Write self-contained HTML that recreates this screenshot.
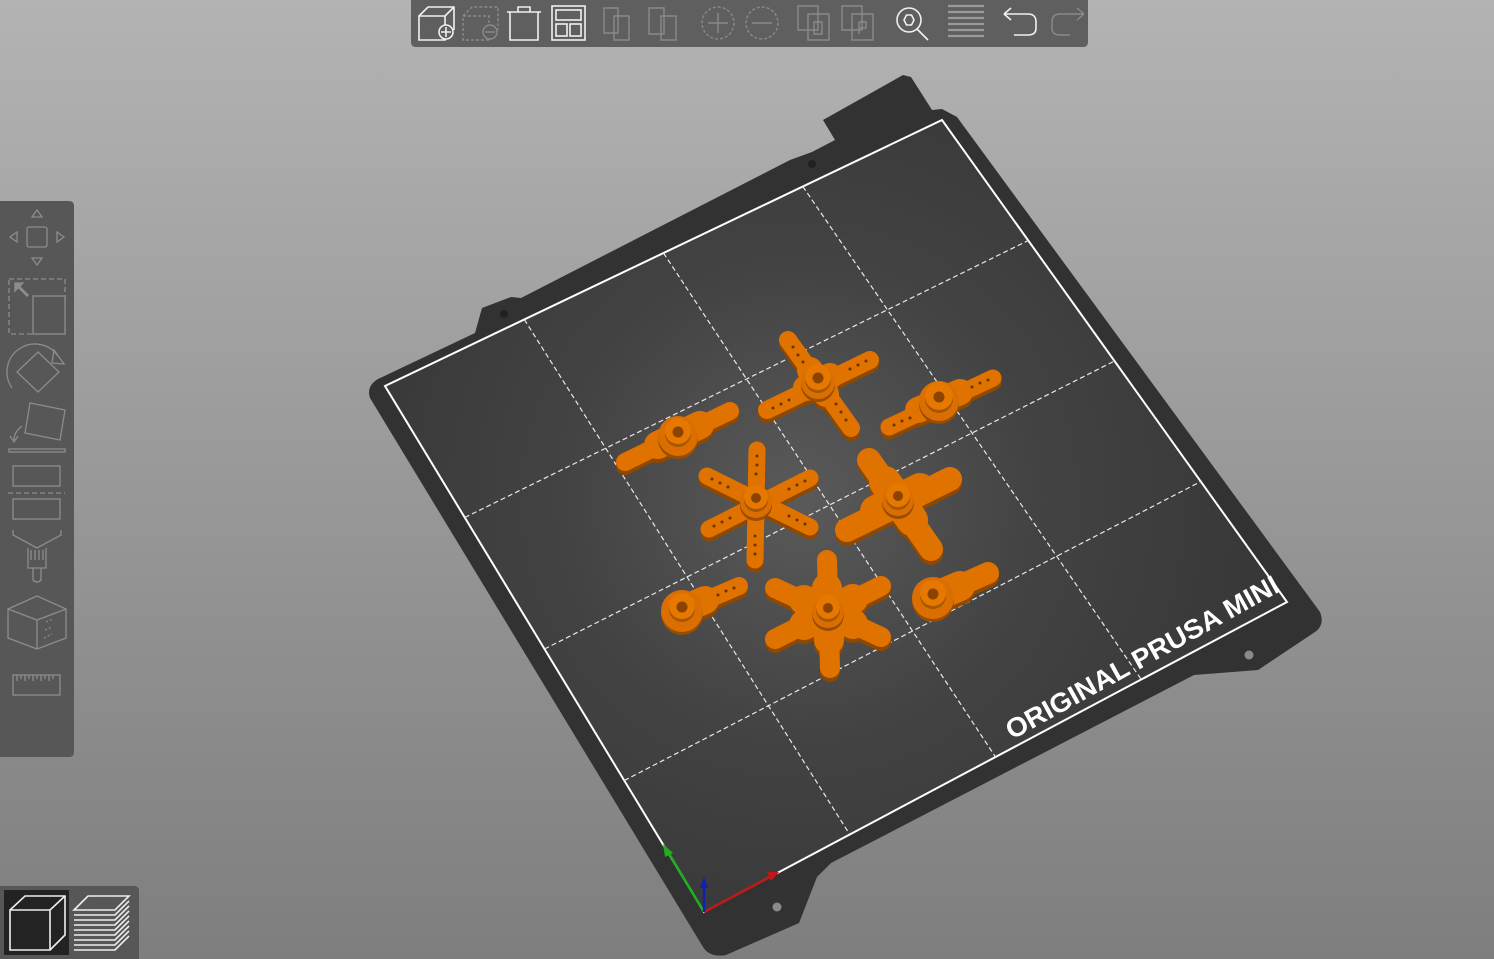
<!DOCTYPE html>
<html><head><meta charset="utf-8"><style>
html,body{margin:0;padding:0;width:1494px;height:959px;overflow:hidden;background:#999}
svg{display:block}
</style></head><body>
<svg width="1494" height="959" viewBox="0 0 1494 959" xmlns="http://www.w3.org/2000/svg">
<defs>
<linearGradient id="bg" x1="0" y1="0" x2="0" y2="1">
<stop offset="0" stop-color="#b3b3b3"/><stop offset="1" stop-color="#7e7e7e"/>
</linearGradient>
<radialGradient id="pl" cx="800" cy="500" r="520" gradientUnits="userSpaceOnUse">
<stop offset="0" stop-color="#5a5a5a"/><stop offset="0.45" stop-color="#434343"/><stop offset="1" stop-color="#353535"/>
</radialGradient>
</defs>
<rect width="1494" height="959" fill="url(#bg)"/>

<!-- plate -->
<path d="M703,947 L370,398 Q366,386 378,379 L475,333 L482,308 L511,297 L521,298 L790,160 L812,152 L835,140 L823,120 L903,75 L911,77 L932,110 L942,109 L957,117 L1320,612 Q1325,625 1315,632 L1258,670 L1194,675 L831,863 L817,877 L799,923 L726,955 Q710,958 703,947 Z" fill="#323232"/>
<polygon points="385,386 942,120 1287,602 704,912" fill="url(#pl)" stroke="#fff" stroke-width="2"/>
<circle cx="1249" cy="655" r="4.5" fill="#8a8a8a"/>
<circle cx="777" cy="907" r="4.5" fill="#8a8a8a"/>
<circle cx="504" cy="314" r="4" fill="#222"/>
<circle cx="812" cy="164" r="4" fill="#222"/>
<g stroke="#e8e8e8" stroke-width="1.2" stroke-dasharray="5,3" fill="none">
<line x1="524.3" y1="319.5" x2="849.8" y2="834.5"/>
<line x1="663.5" y1="253" x2="995.5" y2="757"/>
<line x1="802.8" y1="186.5" x2="1141.3" y2="679.5"/>
<line x1="464.8" y1="517.5" x2="1028.3" y2="240.5"/>
<line x1="544.5" y1="649" x2="1114.5" y2="361"/>
<line x1="624.3" y1="780.5" x2="1200.8" y2="481.5"/>
</g>
<text x="0" y="0" transform="translate(1012,740) rotate(-29)" font-family="Liberation Sans, sans-serif" font-weight="bold" font-size="27" fill="#fff" textLength="308" lengthAdjust="spacingAndGlyphs">ORIGINAL PRUSA MINI</text>

<!-- axes -->
<g stroke-width="2.5">
<line x1="704" y1="912" x2="668" y2="852" stroke="#1fb01f"/>
<line x1="704" y1="912" x2="770" y2="877" stroke="#c01818"/>
<line x1="704" y1="912" x2="704" y2="886" stroke="#1020b0"/>
</g>
<polygon points="663,844 673,853 665,857" fill="#1fb01f"/>
<polygon points="779,872 767,872 771,881" fill="#c01818"/>
<polygon points="704,877 700,888 708,888" fill="#1020b0"/>

<!-- parts -->
<defs>
<g id="a1" fill="none" stroke-linecap="round">
<path d="M788,340 L851,428 M767,410 L870,360" stroke-width="18"/>
<path d="M818,382 L810,370 M818,382 L830,376 M818,382 L806,388 M818,382 L826,394" stroke-width="26"/>
</g>
<g id="a2" fill="none" stroke-linecap="round">
<path d="M993,378 L889,427" stroke-width="17"/>
<path d="M960,392 L918,410" stroke-width="26"/>
</g>
<g id="a3" fill="none" stroke-linecap="round">
<path d="M730,411 L625,462" stroke-width="18"/>
<path d="M700,425 L658,445" stroke-width="28"/>
</g>
<g id="a4" fill="none" stroke-linecap="round">
<path d="M757,450 L755,560 M707,476 L810,527 M810,478 L709,529" stroke-width="17"/>
</g>
<g id="a5" fill="none" stroke-linecap="round">
<path d="M869,460 L931,549 M847,530 L950,479" stroke-width="24"/>
<path d="M898,500 L885,482 M898,500 L912,520 M898,500 L876,511 M898,500 L920,489" stroke-width="32"/>
</g>
<g id="a6" fill="none" stroke-linecap="round">
<path d="M739,586 L690,607" stroke-width="18"/>
<path d="M705,600 L682,610" stroke-width="28"/>
</g>
<g id="a7" fill="none" stroke-linecap="round">
<path d="M827,560 L830,668 M775,588 L881,637 M881,586 L775,639" stroke-width="20"/>
<path d="M828,612 L827,588 M828,612 L829,640 M828,612 L804,600 M828,612 L853,624 M828,612 L853,599 M828,612 L804,625" stroke-width="30"/>
</g>
<g id="a8" fill="none" stroke-linecap="round">
<path d="M988,573 L945,592" stroke-width="22"/>
<path d="M960,586 L935,597" stroke-width="30"/>
</g>
</defs>
<g stroke="#8f4800" transform="translate(0,4)">
<use href="#a1"/><use href="#a2"/><use href="#a3"/><use href="#a4"/><use href="#a5"/><use href="#a6"/><use href="#a7"/><use href="#a8"/>
</g>
<g stroke="#e07200">
<use href="#a1"/><use href="#a2"/><use href="#a3"/><use href="#a4"/><use href="#a5"/><use href="#a6"/><use href="#a7"/><use href="#a8"/>
</g>
<!-- hubs -->
<g>
<g transform="translate(818,382)"><circle r="17" cy="3" fill="#9a4c00"/><circle r="17" fill="#db6e00"/><circle r="13" cy="-2" fill="#a85600"/><circle r="13" cy="-5" fill="#e67800"/><circle r="5.5" cy="-4" fill="#8a4300"/></g>
<g transform="translate(939,401)"><circle r="20" cy="3" fill="#9a4c00"/><circle r="20" fill="#db6e00"/><circle r="14" cy="-2" fill="#a85600"/><circle r="14" cy="-5" fill="#e67800"/><circle r="5.5" cy="-4" fill="#8a4300"/></g>
<g transform="translate(678,436)"><circle r="20" cy="3" fill="#9a4c00"/><circle r="20" fill="#db6e00"/><circle r="13" cy="-2" fill="#a85600"/><circle r="13" cy="-5" fill="#e67800"/><circle r="5.5" cy="-4" fill="#8a4300"/></g>
<g transform="translate(756,502)"><circle r="16" cy="3" fill="#9a4c00"/><circle r="16" fill="#db6e00"/><circle r="12" cy="-2" fill="#a85600"/><circle r="12" cy="-5" fill="#e67800"/><circle r="5" cy="-4" fill="#8a4300"/></g>
<g transform="translate(898,500)"><circle r="16" cy="3" fill="#9a4c00"/><circle r="16" fill="#db6e00"/><circle r="12" cy="-2" fill="#a85600"/><circle r="12" cy="-5" fill="#e67800"/><circle r="5" cy="-4" fill="#8a4300"/></g>
<g transform="translate(682,611)"><circle r="21" cy="3" fill="#9a4c00"/><circle r="21" fill="#db6e00"/><circle r="13" cy="-2" fill="#a85600"/><circle r="13" cy="-5" fill="#e67800"/><circle r="5.5" cy="-4" fill="#8a4300"/></g>
<g transform="translate(828,612)"><circle r="16" cy="3" fill="#9a4c00"/><circle r="16" fill="#db6e00"/><circle r="12" cy="-2" fill="#a85600"/><circle r="12" cy="-5" fill="#e67800"/><circle r="5" cy="-4" fill="#8a4300"/></g>
<g transform="translate(933,598)"><circle r="21" cy="3" fill="#9a4c00"/><circle r="21" fill="#db6e00"/><circle r="13" cy="-2" fill="#a85600"/><circle r="13" cy="-5" fill="#e67800"/><circle r="5.5" cy="-4" fill="#8a4300"/></g>
</g>
<!-- arm holes -->
<g fill="#6a3400">
<circle cx="793" cy="347" r="1.5"/><circle cx="798" cy="355" r="1.5"/><circle cx="803" cy="362" r="1.5"/>
<circle cx="846" cy="420" r="1.5"/><circle cx="841" cy="412" r="1.5"/><circle cx="836" cy="404" r="1.5"/>
<circle cx="773" cy="408" r="1.5"/><circle cx="781" cy="404" r="1.5"/><circle cx="789" cy="400" r="1.5"/>
<circle cx="866" cy="361" r="1.5"/><circle cx="858" cy="365" r="1.5"/><circle cx="850" cy="369" r="1.5"/>
<circle cx="988" cy="380" r="1.5"/><circle cx="980" cy="383" r="1.5"/><circle cx="972" cy="387" r="1.5"/>
<circle cx="894" cy="425" r="1.5"/><circle cx="902" cy="421" r="1.5"/><circle cx="910" cy="418" r="1.5"/>
<circle cx="757" cy="456" r="1.5"/><circle cx="757" cy="465" r="1.5"/><circle cx="756" cy="474" r="1.5"/>
<circle cx="755" cy="554" r="1.5"/><circle cx="755" cy="545" r="1.5"/><circle cx="755" cy="536" r="1.5"/>
<circle cx="712" cy="479" r="1.5"/><circle cx="720" cy="483" r="1.5"/><circle cx="728" cy="487" r="1.5"/>
<circle cx="805" cy="481" r="1.5"/><circle cx="797" cy="485" r="1.5"/><circle cx="789" cy="489" r="1.5"/>
<circle cx="714" cy="526" r="1.5"/><circle cx="722" cy="522" r="1.5"/><circle cx="730" cy="518" r="1.5"/>
<circle cx="805" cy="524" r="1.5"/><circle cx="797" cy="520" r="1.5"/><circle cx="789" cy="516" r="1.5"/>
<circle cx="734" cy="588" r="1.5"/><circle cx="726" cy="591" r="1.5"/><circle cx="718" cy="595" r="1.5"/>
</g>

<!-- top toolbar -->
<path d="M411,0 H1088 V42 Q1088,47 1083,47 H416 Q411,47 411,42 Z" fill="#5f5f5f"/>
<g fill="none" stroke="#f0f0f0" stroke-width="1.6">
<path d="M419,16 L428,7 H454 V30 M419,16 H445 V40 H419 Z M445,16 L454,7"/>
<circle cx="446" cy="32" r="7" fill="#5f5f5f"/><path d="M446,27 V37 M441,32 H451"/>
<path d="M510,12 V40 H538 V12 M507,12 H541 M518,12 V7 H530 V12"/>
<rect x="552" y="6" width="33" height="34"/><rect x="556" y="10" width="25" height="10"/><rect x="556" y="24" width="11" height="12"/><rect x="570" y="24" width="11" height="12"/>
<circle cx="909" cy="20" r="12"/><path d="M904,20 L906.5,15 H911.5 L914,20 L911.5,25 H906.5 Z M917,29 L928,40"/>
<path d="M1004,14 L1011,8 M1004,14 L1011,20 M1004,14 H1028 Q1036,14 1036,22 V28 Q1036,35 1028,35 H1014"/>
</g>
<g fill="none" stroke="#8a8a8a" stroke-width="1.4">
<path d="M463,16 L472,7 H498 V30 M463,16 H489 V40 H463 Z" stroke-dasharray="3,2"/>
<circle cx="490" cy="32" r="7" fill="#5f5f5f"/><path d="M485,32 H495"/>
<path d="M604,8 H618 V33 H604 Z M614,16 H629 V40 H614 Z"/><path d="M649,8 H664 V34 H649 Z M661,16 H676 V40 H661 Z"/>
<circle cx="718" cy="23" r="16" stroke-dasharray="3,2"/><path d="M718,13 V33 M708,23 H728"/>
<circle cx="762" cy="23" r="16" stroke-dasharray="3,2"/><path d="M752,23 H772"/>
<path d="M798,6 H818 V30 H798 Z M808,14 H829 V40 H808 Z M814,22 H822 V34 H814 Z"/>
<path d="M842,6 H862 V30 H842 Z M852,14 H873 V40 H852 Z M859,22 V34 M859,22 H866 V28 H859"/>
<path d="M1084,14 L1077,8 M1084,14 L1077,20 M1084,14 H1060 Q1052,14 1052,22 V28 Q1052,35 1060,35 H1070"/>
</g>
<g stroke="#9a9a9a" stroke-width="2.2">
<path d="M948,6 H984 M948,12 H984 M948,18 H984 M948,24 H984 M948,30 H984 M948,36 H984"/>
</g>

<!-- left toolbar -->
<path d="M0,201 H69 Q74,201 74,206 V752 Q74,757 69,757 H0 Z" fill="#575757"/>
<g fill="none" stroke="#8c8c8c" stroke-width="1.3">
<rect x="27" y="227" width="20" height="20" rx="2"/>
<path d="M37,210 L32,217 H42 Z M37,265 L32,258 H42 Z M10,237 L17,232 V242 Z M64,237 L57,232 V242 Z"/>
<rect x="9" y="279" width="56" height="55" stroke-dasharray="5,3"/>
<rect x="33" y="296" width="32" height="38" fill="#575757"/>
<path d="M17,285 L28,296" stroke-width="3"/><path d="M15,283 H23 L15,291 Z" fill="#8c8c8c"/>
<path d="M12,388 A28,28 0 0 1 58,356"/><path d="M54,350 L64,364 L52,363 Z"/>
<path d="M38,352 L59,372 L38,392 L17,372 Z"/>
<path d="M30,403 L65,410 L60,440 L25,433 Z"/><path d="M22,426 Q14,432 14,440 M10,436 L14,442 L18,436"/><rect x="9" y="449" width="56" height="3"/>
<rect x="13" y="466" width="47" height="20"/><path d="M8,493 H65" stroke-dasharray="5,3"/><rect x="13" y="499" width="47" height="20"/>
<path d="M13,530 V535 L37,548 L61,535 V530 M28,548 V568 H46 V548 M33,568 V580 Q37,584 41,580 V568 M31,550 V560 M35,550 V560 M39,550 V560 M43,550 V560"/>
<path d="M8,609 L37,596 L66,609 V638 L37,649 L8,638 Z M8,609 L37,620 L66,609 M37,620 V649"/>
<path d="M45,630 L52,627 M44,638 L52,634 M46,622 L53,619" stroke-dasharray="2,2"/>
<rect x="13" y="675" width="47" height="20"/><path d="M17,675 V681 M21,675 V679 M25,675 V681 M29,675 V679 M33,675 V681 M37,675 V679 M41,675 V681 M45,675 V679 M49,675 V681 M53,675 V679"/>
</g>

<!-- bottom-left view toolbar -->
<path d="M0,886 H134 Q139,886 139,891 V959 H0 Z" fill="#575757"/>
<rect x="4" y="890" width="65" height="65" fill="#232323"/>
<g fill="none" stroke="#eeeeee" stroke-width="1.6">
<path d="M10,910 H50 V950 H10 Z M10,910 L25,896 H65 V935 L50,950 M50,910 L65,896"/>
<path d="M74,910 L88,896 H129 L115,910 Z"/>
<path d="M74,915 H115 L129,901 M74,920 H115 L129,906 M74,925 H115 L129,911 M74,930 H115 L129,916 M74,935 H115 L129,921 M74,940 H115 L129,926 M74,945 H115 L129,931 M74,950 H115 L129,936"/>
</g>
</svg>
</body></html>
